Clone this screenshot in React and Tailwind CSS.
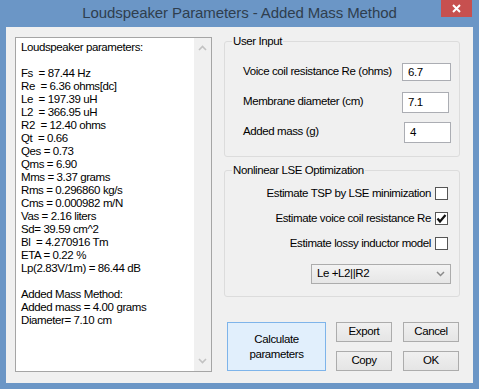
import React from "react";

const lines = [
  "Loudspeaker parameters:",
  "",
  "Fs  = 87.44 Hz",
  "Re  = 6.36 ohms[dc]",
  "Le  = 197.39 uH",
  "L2  = 366.95 uH",
  "R2  = 12.40 ohms",
  "Qt  = 0.66",
  "Qes = 0.73",
  "Qms = 6.90",
  "Mms = 3.37 grams",
  "Rms = 0.296860 kg/s",
  "Cms = 0.000982 m/N",
  "Vas = 2.16 liters",
  "Sd= 39.59 cm^2",
  "Bl  = 4.270916 Tm",
  "ETA = 0.22 %",
  "Lp(2.83V/1m) = 86.44 dB",
  "",
  "Added Mass Method:",
  "Added mass = 4.00 grams",
  "Diameter= 7.10 cm",
];

const Chevron = ({ up }) => (
  <svg width="9" height="6" viewBox="0 0 9 6" className="text-[#c2c2c2]">
    <path
      d={up ? "M1 5 L4.5 1.5 L8 5" : "M1 1 L4.5 4.5 L8 1"}
      fill="none"
      stroke="currentColor"
      strokeWidth="1.6"
    />
  </svg>
);

const Check = ({ checked }) => (
  <div className="w-[13px] h-[13px] border border-[#555] bg-white flex items-center justify-center">
    {checked && (
      <svg width="11" height="11" viewBox="0 0 11 11">
        <path d="M1.5 5.5 L4 8.5 L9.5 2" fill="none" stroke="#111" strokeWidth="2.2" />
      </svg>
    )}
  </div>
);

const Btn = ({ children }) => (
  <button className="w-[56px] h-[20px] border border-[#acacac] bg-gradient-to-b from-[#f0f0f0] to-[#e5e5e5] leading-none">
    {children}
  </button>
);

export default function App() {
  return (
    <div className="w-[479px] h-[389px] bg-[#6b96c6] flex flex-col font-['Liberation_Sans',sans-serif] text-black">
      {/* title bar */}
      <div className="relative h-[27px] flex items-center justify-center">
        <span className="text-[15px] tracking-[-0.1px] text-[#2f3e4e] pb-[1px]">
          Loudspeaker Parameters - Added Mass Method
        </span>
        <div className="absolute right-[7px] top-0 w-[31px] h-[17px] bg-[#c7504f] flex items-center justify-center">
          <svg width="9" height="9" viewBox="0 0 9 9">
            <path d="M1 1 L8 8 M8 1 L1 8" stroke="white" strokeWidth="2" />
          </svg>
        </div>
      </div>

      <div className="mx-[6px] h-[356px] bg-[#f0f0f0] flex text-[11.5px] tracking-[-0.4px]">
        {/* results box */}
        <div className="ml-[9px] mt-[10px] w-[197px] h-[335px] border border-[#a5a5a5] bg-white flex">
          <div className="flex-1 pl-[5px] pt-[3px] leading-[13px] whitespace-pre">
            {lines.map((l, i) => (
              <div key={i} className="h-[13px]">
                {l}
              </div>
            ))}
          </div>
          <div className="w-[17px] bg-[#f0f0f0] flex flex-col justify-between items-center py-[7px]">
            <Chevron up />
            <Chevron />
          </div>
        </div>

        {/* right side */}
        <div className="ml-[12px] w-[236px] pt-[14px] flex flex-col whitespace-nowrap">
          <div className="relative h-[116px] border border-[#dcdcdc] rounded-[3px] pt-[15px] pl-[18px] pr-[8px]">
            <span className="absolute left-[7px] -top-[8px] px-[1px] bg-[#f0f0f0] leading-[14px]">
              User Input
            </span>
            <div className="h-[30px] flex items-center justify-between">
              <span>Voice coil resistance Re (ohms)</span>
              <div className="w-[49px] h-[18px] border border-[#abadb3] bg-white pl-[5px] leading-[16px]">
                6.7
              </div>
            </div>
            <div className="h-[30px] flex items-center justify-between">
              <span>Membrane diameter (cm)</span>
              <div className="w-[47px] h-[21px] mr-[2px] border border-[#abadb3] bg-white pl-[5px] pt-[2px] leading-[14px]">
                7.1
              </div>
            </div>
            <div className="h-[30px] flex items-center justify-between">
              <span>Added mass (g)</span>
              <div className="w-[47px] h-[21px] border border-[#abadb3] bg-white pl-[5px] leading-[19px]">
                4
              </div>
            </div>
          </div>

          <div className="relative mt-[13px] h-[127px] border border-[#dcdcdc] rounded-[3px] pt-[10px] pr-[11px] flex flex-col items-end">
            <span className="absolute left-[7px] -top-[8px] px-[1px] bg-[#f0f0f0] leading-[14px]">
              Nonlinear LSE Optimization
            </span>
            <div className="h-[25px] flex items-center gap-[4px]">
              <span>Estimate TSP by LSE minimization</span>
              <Check />
            </div>
            <div className="h-[25px] flex items-center gap-[4px]">
              <span>Estimate voice coil resistance Re</span>
              <Check checked />
            </div>
            <div className="h-[25px] flex items-center gap-[4px]">
              <span>Estimate lossy inductor model</span>
              <Check />
            </div>
            <div className="mt-[8px] mr-[-3px] w-[140px] h-[20px] border border-[#acacac] bg-gradient-to-b from-[#f3f3f3] to-[#e6e6e6] flex items-center justify-between pl-[5px] pr-[5px]">
              <span>Le +L2||R2</span>
              <svg width="9" height="6" viewBox="0 0 9 6">
                <path d="M1 1 L4.5 4.5 L8 1" fill="none" stroke="#8a8a8a" strokeWidth="1.5" />
              </svg>
            </div>
          </div>

          <div className="mt-[25px] flex">
            <button className="ml-[3px] w-[99px] h-[49px] border border-[#7eb4ea] bg-[#e1effc] leading-[15px]">
              Calculate
              <br />
              parameters
            </button>
            <div className="ml-[10px] grid grid-cols-2 gap-x-[11px] gap-y-[9px]">
              <Btn>Export</Btn>
              <Btn>Cancel</Btn>
              <Btn>Copy</Btn>
              <Btn>OK</Btn>
            </div>
          </div>
        </div>
      </div>
    </div>
  );
}
